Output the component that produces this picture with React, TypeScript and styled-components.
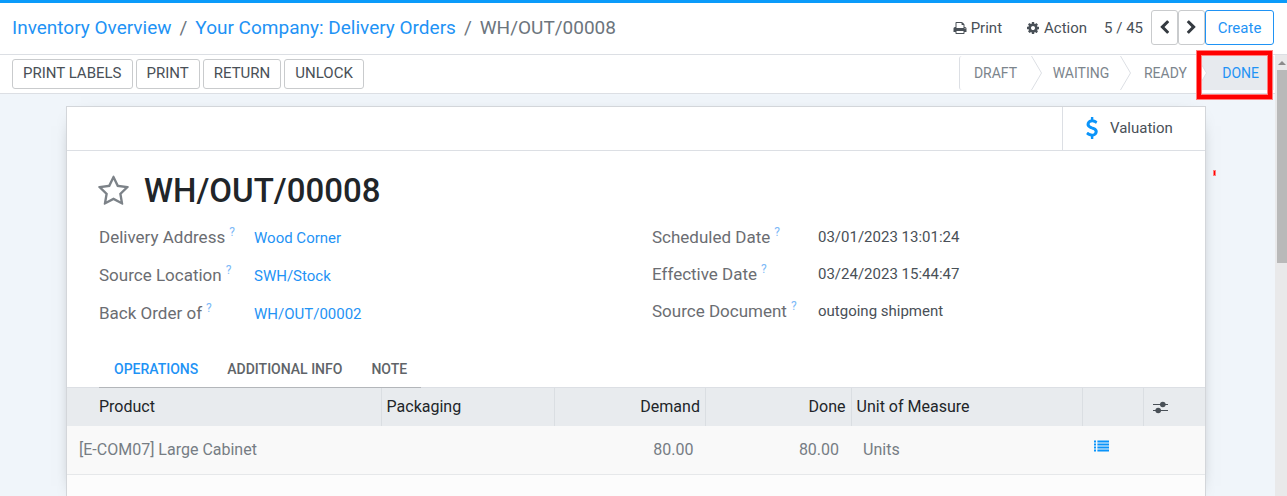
import React from "react";
import styled, { createGlobalStyle } from "styled-components";

const blue = "#1f93f5";
const line = "#dcdfe4";

const GlobalStyle = createGlobalStyle`
  *, *::before, *::after { box-sizing: border-box; }
  body { margin: 0; background: #fff; color: #495057; font-family: Roboto, "Liberation Sans", sans-serif; font-size: 15px; line-height: 20px; }
  button { font: inherit; color: inherit; cursor: pointer; }
  a { color: ${blue}; text-decoration: none; }
`;

const Page = styled.div`
  display: flex;
  flex-direction: column;
  min-height: 100vh;
  border-top: 3px solid #0a9bfa;
`;

const Header = styled.header`
  display: flex;
  align-items: center;
  justify-content: space-between;
  height: 52px;
  padding: 0 13px 2px 12px;
  border-bottom: 1px solid ${line};
`;

const Breadcrumb = styled.nav`
  display: flex;
  gap: 8px;
  font-size: 19px;
  line-height: 24px;
  color: #6c757d;
  white-space: nowrap;
`;

const Controls = styled.div`
  display: flex;
  align-items: center;
  white-space: nowrap;
`;

const MenuButton = styled.button`
  display: flex;
  align-items: center;
  gap: 4px;
  margin-right: 24px;
  padding: 0;
  border: 0;
  background: none;
`;

const Pager = styled.span`
  margin: 0 8px 0 -7px;
`;

const BoxButton = styled.button<{ $primary?: boolean }>`
  display: flex;
  align-items: center;
  justify-content: center;
  height: 35px;
  min-width: ${(p) => (p.$primary ? "69px" : "27px")};
  padding: 0;
  border: 1px solid ${(p) => (p.$primary ? blue : "#c9cbcd")};
  border-radius: 3px;
  background: #fff;
  color: ${(p) => (p.$primary ? blue : "#343a40")};
`;

const Body = styled.div`
  display: flex;
  flex: 1;
`;

const Main = styled.main`
  display: flex;
  flex-direction: column;
  flex: 1;
  min-width: 0;
  background: #f0f5fa;
`;

const ScrollTrack = styled.div`
  display: flex;
  flex-direction: column;
  align-items: flex-end;
  flex: 0 0 12px;
  background: #e9e9ea;
`;

const ScrollArrow = styled.svg`
  width: 10px;
  height: 15px;
  fill: #8b8b8b;
`;

const ScrollThumb = styled.div`
  width: 10px;
  height: 193px;
  background: #b9b9b9;
`;

const StatusBar = styled.div`
  display: flex;
  justify-content: space-between;
  height: 39px;
  padding-left: 12px;
  border-bottom: 1px solid ${line};
  background: #fff;
`;

const Actions = styled.div`
  display: flex;
  align-items: center;
  gap: 3px;
`;

const ActionButton = styled.button`
  height: 30px;
  padding: 0 10px 2px;
  border: 1px solid #c9cbcd;
  border-radius: 3px;
  background: #fff;
  white-space: nowrap;
`;

const Steps = styled.ol`
  display: flex;
  margin: 1px 1px 3px 0;
  padding: 0;
  border-left: 1px solid ${line};
  border-radius: 3px;
  list-style: none;
  font-size: 14px;
  color: #7c858d;
`;

const Step = styled.li<{ $width: number; $active?: boolean }>`
  position: relative;
  display: flex;
  align-items: center;
  justify-content: ${(p) => (p.$active ? "flex-end" : "center")};
  width: ${(p) => p.$width}px;
  padding-right: ${(p) => (p.$active ? "15px" : "0")};
  background: ${(p) => (p.$active ? "#e7eaee" : "none")};
  color: ${(p) => (p.$active ? blue : "inherit")};
`;

const Chevron = styled.svg`
  flex: none;
  width: 11px;
  height: 34px;
  fill: #fff;
  stroke: ${line};
`;

const StepTip = styled(Chevron)`
  position: absolute;
  left: -4px;
  top: 0;
`;

const Highlight = styled.span`
  position: absolute;
  inset: -5px 2px -9px -3px;
  border: 4px solid #f00;
  box-shadow: 0 0 0 1px #ff7f7f, inset 0 0 0 1px #ff7f7f;
`;

const Canvas = styled.div`
  position: relative;
  display: flex;
  flex: 1;
  padding: 12px 69px 0 66px;
`;

const StrayMark = styled.span`
  position: absolute;
  top: 76px;
  right: 59px;
  width: 3px;
  height: 6px;
  border: 1px solid #ff7f7f;
  background: #f00;
`;

const Sheet = styled.section`
  flex: 1;
  min-width: 0;
  border: 1px solid #d3d6da;
  border-bottom: 0;
  background: #fff;
  box-shadow: 0 5px 20px -15px #000;
`;

const ButtonBox = styled.div`
  display: flex;
  justify-content: flex-end;
  height: 44px;
  border-bottom: 1px solid ${line};
`;

const StatButton = styled.button`
  display: flex;
  align-items: center;
  gap: 7px;
  width: 143px;
  padding: 0 0 2px 18px;
  border: 0;
  border-left: 1px solid ${line};
  background: none;
`;

const TitleRow = styled.div`
  display: flex;
  align-items: center;
  gap: 14px;
  padding: 20px 30px 0;
`;

const StarButton = styled.button`
  display: flex;
  padding: 0;
  border: 0;
  background: none;
  color: #7c8288;
`;

const Title = styled.h1`
  margin: 0;
  font-size: 33px;
  line-height: 40px;
  font-weight: 500;
  color: #212529;
`;

const Groups = styled.div`
  display: grid;
  grid-template-columns: 1fr 1fr;
  column-gap: 32px;
  padding: 8px 32px 0;
`;

const Fields = styled.dl<{ $label: number; $row: number }>`
  display: grid;
  grid-template-columns: ${(p) => p.$label}px 1fr;
  grid-auto-rows: ${(p) => p.$row}px;
  align-content: start;
  margin: 0;
`;

const Label = styled.dt`
  font-size: 17px;
  line-height: 36px;
  color: #6b6d72;
  white-space: nowrap;
`;

const Help = styled.sup`
  margin-left: 4px;
  font-size: 12px;
  line-height: 0;
  color: #7db9f7;
`;

const Value = styled.dd<{ $link?: boolean }>`
  margin: 0;
  line-height: ${(p) => (p.$link ? "38px" : "36px")};
`;

const Tabs = styled.div`
  position: relative;
  display: flex;
  width: fit-content;
  height: 38px;
  margin: 17px 0 0 32px;
  border-bottom: 1px solid #b3b6ba;
`;

const Tab = styled.button<{ $active?: boolean }>`
  padding: 0 14px 0 15px;
  border: 0;
  background: none;
  font-size: 14px;
  font-weight: 500;
  color: ${(p) => (p.$active ? blue : "#606468")};
`;

const Lines = styled.div`
  min-height: 109px;
  margin-top: -1px;
  border-top: 1px solid ${line};
  background: #fcfcfc;
`;

const Table = styled.table`
  width: 100%;
  table-layout: fixed;
  border-collapse: collapse;
  font-size: 16px;
`;

const Col = styled.col<{ $share: number }>`
  width: ${(p) => p.$share}%;
`;

const HeadCell = styled.th<{ $end?: boolean; $first?: boolean }>`
  height: 38px;
  padding: 0 5px 0 ${(p) => (p.$first ? "32px" : "5px")};
  border-right: 1px solid #dadee2;
  background: #e8ebee;
  font-weight: 400;
  color: #212529;
  text-align: ${(p) => (p.$end ? "right" : "left")};
  &:last-child { border-right: 0; padding-left: 9px; }
`;

const Cell = styled.td<{ $end?: boolean }>`
  height: 48px;
  padding: 0 12px;
  border-bottom: 1px solid #e6e8ea;
  background: #f9f9f9;
  color: #767d84;
  text-align: ${(p) => (p.$end ? "right" : "left")};
`;

const IconButton = styled.button<{ $blue?: boolean }>`
  display: flex;
  padding: 0 0 ${(p) => (p.$blue ? "8px" : "0")};
  border: 0;
  background: none;
  color: ${(p) => (p.$blue ? blue : "#495057")};
`;

const paths = {
  print: "M448 1536h896v-256h-896v256zm0-640h896v-384h-160q-40 0-68-28t-28-68v-160h-640v640zm1152 64q0-26-19-45t-45-19-45 19-19 45 19 45 45 19 45-19 19-45zm128 0v416q0 13-9.5 22.5t-22.5 9.5h-224v160q0 40-28 68t-68 28h-960q-40 0-68-28t-28-68v-160h-224q-13 0-22.5-9.5t-9.5-22.5v-416q0-79 56.5-135.5t135.5-56.5h64v-544q0-40 28-68t68-28h672q40 0 88 20t76 48l152 152q28 28 48 76t20 88v256h64q79 0 135.5 56.5t56.5 135.5z",
  cog: "M1152 896q0-106-75-181t-181-75-181 75-75 181 75 181 181 75 181-75 75-181zm512-109v222q0 12-8 23t-20 13l-185 28q-19 54-39 91 35 50 107 138 10 12 10 25t-9 23q-27 37-99 108t-94 71q-12 0-26-9l-138-108q-44 23-91 38-16 136-29 186-7 28-36 28h-222q-14 0-24.5-8.5t-11.5-21.5l-28-184q-49-16-90-37l-141 107q-10 9-25 9-14 0-25-11-126-114-165-168-7-10-7-23 0-12 8-23 15-21 51-66.5t54-70.5q-27-50-41-99l-183-27q-13-2-21-12.5t-8-23.5v-222q0-12 8-23t19-13l186-28q14-46 39-92-40-57-107-138-10-12-10-24 0-10 9-23 26-36 98.5-107.5t94.5-71.5q13 0 26 10l138 107q44-23 91-38 16-136 29-186 7-28 36-28h222q14 0 24.5 8.5t11.5 21.5l28 184q49 16 90 37l142-107q9-9 24-9 13 0 25 10 129 119 165 170 7 8 7 22 0 12-8 23-15 21-51 66.5t-54 70.5q26 50 41 98l183 28q13 2 21 12.5t8 23.5z",
  left: "M1427 301l-531 531 531 531q19 19 19 45t-19 45l-166 166q-19 19-45 19t-45-19l-742-742q-19-19-19-45t19-45l742-742q19-19 45-19t45 19l166 166q19 19 19 45t-19 45z",
  right: "M1363 877l-742 742q-19 19-45 19t-45-19l-166-166q-19-19-19-45t19-45l531-531-531-531q-19-19-19-45t19-45l166-166q19-19 45-19t45 19l742 742q19 19 19 45t-19 45z",
  star: "M1201 1004l306-297-422-62-189-382-189 382-422 62 306 297-73 421 378-199 377 199zm527-357q0 22-26 48l-363 354 86 500q1 7 1 20 0 50-41 50-19 0-40-12l-449-236-449 236q-22 12-40 12-21 0-31.5-14.5t-10.5-35.5q0-6 2-20l86-500-364-354q-25-27-25-48 0-37 56-46l502-73 225-455q19-41 49-41t49 41l225 455 502 73q56 9 56 46z",
  dollar: "M1362 1185q0 153-99.5 263.5t-258.5 136.5v175q0 14-9 23t-23 9h-135q-13 0-22.5-9.5t-9.5-22.5v-175q-66-9-127.5-31t-101.5-44.5-74-48-46.5-37.5-17.5-18q-17-21-2-41l103-135q7-10 23-12 15-2 24 9l2 2q113 99 243 125 37 8 74 8 81 0 142.5-43t61.5-122q0-28-15-53t-33.5-42-58.5-37.5-66-32-80-32.5q-39-16-61.5-25t-61.5-26.5-62.5-31-56.5-35.5-53.5-42.5-43.5-49-35.5-58-21-66.5-8.5-78q0-138 98-242t255-134v-180q0-13 9.5-22.5t22.5-9.5h135q14 0 23 9t9 23v176q57 6 110.5 23t87 33.5 63.5 37.5 39 29 15 14q17 18 5 38l-81 146q-8 15-23 16-14 3-27-7-3-3-14.5-12t-39-26.5-58.5-32-74.5-26-85.5-11.5q-95 0-155 43t-60 111q0 26 8.5 48t29.5 41.5 39.5 33 56 31 60.5 27 70 27.5q53 20 81 31.5t76 35 75.5 42.5 62 50 53 63.5 31.5 76.5 13 94z",
};

function Icon({ name, size, color }: { name: keyof typeof paths; size: number; color?: string }) {
  return (
    <svg width={size} height={size} viewBox="0 0 1792 1792" fill={color ?? "currentColor"} aria-hidden="true">
      <path d={paths[name]} />
    </svg>
  );
}

const Arrow = () => (
  <Chevron viewBox="0 0 11 34" aria-hidden="true">
    <path d="M0.5 0L10.5 17L0.5 34" />
  </Chevron>
);

const ListIcon = () => (
  <svg width="15" height="12" viewBox="0 0 15 12" fill="#0a94fa" aria-hidden="true">
    {[0, 3, 6, 9].map((y) => (
      <g key={y}>
        <rect x="0" y={y + 0.5} width="2" height="2" />
        <rect x="3.4" y={y + 0.5} width="11.6" height="2" />
      </g>
    ))}
  </svg>
);

const SlidersIcon = () => (
  <svg width="15" height="13" viewBox="0 0 15 13" fill="currentColor" aria-hidden="true">
    <rect x="0" y="3" width="15" height="1" />
    <rect x="0" y="9" width="15" height="1" />
    <circle cx="9.8" cy="3.5" r="2.8" />
    <circle cx="5.2" cy="9.5" r="2.8" />
  </svg>
);

const leftFields = [
  ["Delivery Address", "Wood Corner"],
  ["Source Location", "SWH/Stock"],
  ["Back Order of", "WH/OUT/00002"],
];

const rightFields = [
  ["Scheduled Date", "03/01/2023 13:01:24"],
  ["Effective Date", "03/24/2023 15:44:47"],
  ["Source Document", "outgoing shipment"],
];

export default function App() {
  return (
    <>
      <GlobalStyle />
      <Page>
        <Header>
          <Breadcrumb aria-label="Breadcrumb">
            <a href="#inventory">Inventory Overview</a>
            <span>/</span>
            <a href="#orders">Your Company: Delivery Orders</a>
            <span>/</span>
            <span>WH/OUT/00008</span>
          </Breadcrumb>
          <Controls>
            <MenuButton><Icon name="print" size={14} />Print</MenuButton>
            <MenuButton><Icon name="cog" size={14} />Action</MenuButton>
            <Pager>5 / 45</Pager>
            <BoxButton aria-label="Previous"><Icon name="left" size={15} /></BoxButton>
            <BoxButton aria-label="Next"><Icon name="right" size={15} /></BoxButton>
            <BoxButton $primary>Create</BoxButton>
          </Controls>
        </Header>
        <Body>
          <Main>
            <StatusBar>
              <Actions>
                <ActionButton>PRINT LABELS</ActionButton>
                <ActionButton>PRINT</ActionButton>
                <ActionButton>RETURN</ActionButton>
                <ActionButton>UNLOCK</ActionButton>
              </Actions>
              <Steps>
                <Step $width={71}>DRAFT</Step>
                <Arrow />
                <Step $width={78}>WAITING</Step>
                <Arrow />
                <Step $width={69}>READY</Step>
                <Step $width={74} $active>
                  <StepTip viewBox="0 0 11 34" aria-hidden="true">
                    <path d="M0.5 0L10.5 17L0.5 34" />
                  </StepTip>
                  DONE
                  <Highlight />
                </Step>
              </Steps>
            </StatusBar>
            <Canvas>
              <Sheet>
                <ButtonBox>
                  <StatButton><Icon name="dollar" size={22} color="#0a94fa" />Valuation</StatButton>
                </ButtonBox>
                <TitleRow>
                  <StarButton aria-label="Priority"><Icon name="star" size={33} /></StarButton>
                  <Title>WH/OUT/00008</Title>
                </TitleRow>
                <Groups>
                  <Fields $label={155} $row={38}>
                    {leftFields.map(([label, value]) => (
                      <React.Fragment key={label}>
                        <Label>{label}<Help>?</Help></Label>
                        <Value $link><a href="#record">{value}</a></Value>
                      </React.Fragment>
                    ))}
                  </Fields>
                  <Fields $label={166} $row={37}>
                    {rightFields.map(([label, value]) => (
                      <React.Fragment key={label}>
                        <Label>{label}<Help>?</Help></Label>
                        <Value>{value}</Value>
                      </React.Fragment>
                    ))}
                  </Fields>
                </Groups>
                <Tabs role="tablist">
                  <Tab role="tab" aria-selected="true" $active>OPERATIONS</Tab>
                  <Tab role="tab" aria-selected="false">ADDITIONAL INFO</Tab>
                  <Tab role="tab" aria-selected="false">NOTE</Tab>
                </Tabs>
                <Lines>
                  <Table>
                    <colgroup>
                      {[27.6, 15.2, 13.3, 12.8, 20.3, 5.4, 5.4].map((share, i) => <Col key={i} $share={share} />)}
                    </colgroup>
                    <thead>
                      <tr>
                        <HeadCell $first>Product</HeadCell>
                        <HeadCell>Packaging</HeadCell>
                        <HeadCell $end>Demand</HeadCell>
                        <HeadCell $end>Done</HeadCell>
                        <HeadCell>Unit of Measure</HeadCell>
                        <HeadCell />
                        <HeadCell><IconButton aria-label="Optional columns"><SlidersIcon /></IconButton></HeadCell>
                      </tr>
                    </thead>
                    <tbody>
                      <tr>
                        <Cell>[E-COM07] Large Cabinet</Cell>
                        <Cell />
                        <Cell $end>80.00</Cell>
                        <Cell $end>80.00</Cell>
                        <Cell>Units</Cell>
                        <Cell><IconButton $blue aria-label="Details"><ListIcon /></IconButton></Cell>
                        <Cell />
                      </tr>
                    </tbody>
                  </Table>
                </Lines>
              </Sheet>
              <StrayMark />
            </Canvas>
          </Main>
          <ScrollTrack aria-hidden="true">
            <ScrollArrow viewBox="0 0 10 15"><path d="M1 10L5 6L9 10Z" /></ScrollArrow>
            <ScrollThumb />
          </ScrollTrack>
        </Body>
      </Page>
    </>
  );
}
